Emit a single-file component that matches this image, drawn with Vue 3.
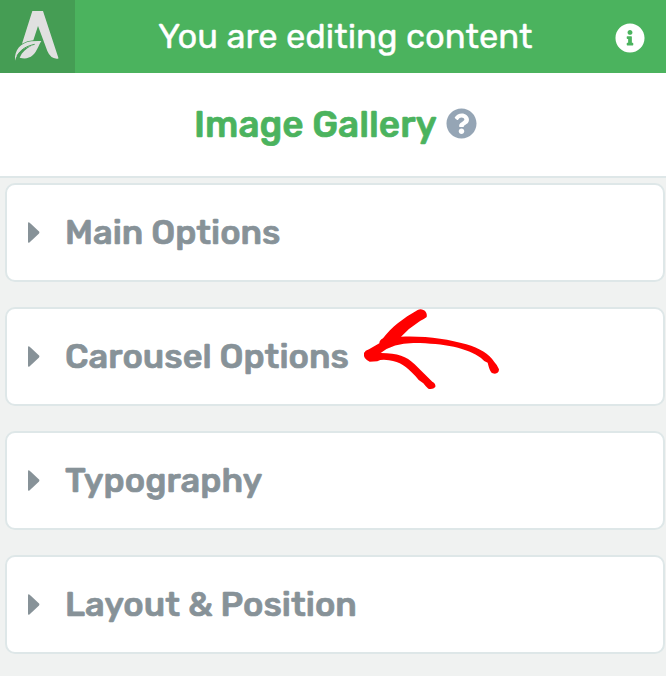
<template>
  <div class="panel">
    <header class="top-bar">
      <div class="logo">
        <svg width="75" height="73" viewBox="0 0 225 219">
          <path d="M97 33H129L175 173Q177 177 170 176Q151 175 142 153L114 78L100 121Q82 122 66 131Z" fill="#e0e0e0" />
          <path d="M45 182C43 151 61 128 94 124Q110 122 124 123C115 137 112 153 98 166C87 176 73 177 59 173C66 156 78 145 95 137C69 143 51 157 45 182Z" fill="#e0e0e0" />
          <path d="M51 168C62 148 80 138 104 133" fill="none" stroke="#459d54" stroke-width="3" />
        </svg>
      </div>
      <h1>You are editing content</h1>
      <svg class="info-icon" width="30" height="30" viewBox="0 0 512 512">
        <path fill="#fff" d="M256 8C119 8 8 119 8 256s111 248 248 248 248-111 248-248S393 8 256 8zm0 110c23 0 42 19 42 42s-19 42-42 42-42-19-42-42 19-42 42-42zm56 254c0 7-5 12-12 12h-88c-7 0-12-5-12-12v-24c0-7 5-12 12-12h12v-64h-12c-7 0-12-5-12-12v-24c0-7 5-12 12-12h64c7 0 12 5 12 12v100h12c7 0 12 5 12 12z" />
      </svg>
    </header>

    <div class="module-title">
      <h2>Image Gallery</h2>
      <svg class="help-icon" width="31" height="31" viewBox="0 0 512 512">
        <path fill="#95a5b5" d="M504 256c0 137-111 248-248 248S8 393 8 256 119 8 256 8s248 111 248 248zM262.700 90c-54.500 0-89.300 23-116.500 63.800-3.500 5.300-2.400 12.400 2.700 16.300l34.700 26.300c5.200 3.900 12.600 3 16.700-2.100 17.900-22.700 30.100-35.800 57.300-35.800 20.400 0 45.700 13.100 45.700 33 0 15-12.400 22.700-32.500 34C247.100 238.500 216 254.900 216 296v4c0 6.600 5.400 12 12 12h56c6.600 0 12-5.400 12-12v-1.300c0-28.500 83.200-29.600 83.200-106.700 0-58-60.200-102-116.500-102zM256 338c-25.400 0-46 20.600-46 46s20.600 46 46 46 46-20.600 46-46-20.600-46-46-46z" />
      </svg>
    </div>

    <div class="sections">
      <div v-for="section in sections" :key="section.name" class="section">
        <svg class="caret" width="12" height="21" viewBox="0 0 12 21">
          <path d="M0 1.500Q0-.5 1.700.8L10.800 9.300Q12 10.500 10.800 11.700L1.700 20.200Q0 21.500 0 19.500Z" fill="#879298" />
        </svg>
        <span class="section-name">{{ section.name }}</span>
        <svg v-if="section.marked" class="arrow" width="160" height="110" viewBox="0 0 480 330">
          <path d="M42 174Q45 167 57 163L88 145Q88 136 99 130C125 96 159 70 203 45C218 38 234 51 230 66C224 72 214 75 207 80Q178 98 153 125C227 122 295 132 349 148C389 160 417 176 433 201Q442 210 447 223C447 235 438 238 428 235C419 230 416 214 413 203Q400 198 393 189C354 159 281 145 194 144Q131 143 92 174C145 175 168 183 194 208L247 260Q258 265 256 276Q249 284 235 281Q228 276 220 265Q206 258 196 243C167 213 151 201 117 196Q94 192 82 199L59 200Q39 192 42 174Z" fill="#f00" />
        </svg>
      </div>
    </div>
  </div>
</template>

<script setup>
const sections = [
  { name: 'Main Options' },
  { name: 'Carousel Options', marked: true },
  { name: 'Typography' },
  { name: 'Layout & Position' },
];
</script>

<style>
body {
  margin: 0;
  background: #f0f2f1;
}
</style>

<style scoped>
.panel {
  min-height: 676px;
  background: #f0f2f1;
  font-family: Rubik, Roboto, sans-serif;
}

svg {
  display: block;
  flex-shrink: 0;
}

.top-bar {
  display: flex;
  align-items: center;
  height: 73px;
  background: #4bb35e;
}

.logo {
  width: 75px;
  height: 73px;
  background: #459d54;
}

h1 {
  flex: 1;
  margin: 0;
  padding-left: 83px;
  color: #fff;
  font-size: 34.5px;
  font-weight: 400;
  line-height: 71px;
  -webkit-text-stroke: 0.4px #fff;
  white-space: nowrap;
}

.info-icon {
  margin-right: 21px;
  margin-top: 3px;
}

.module-title {
  display: flex;
  align-items: center;
  box-sizing: border-box;
  height: 105px;
  padding-left: 194px;
  background: #fff;
  border-bottom: 2px solid #dee7e8;
}

h2 {
  width: 252px;
  margin: 0;
  padding-bottom: 2px;
  color: #4bb35e;
  font-size: 37px;
  font-weight: 500;
  -webkit-text-stroke: 0.7px #4bb35e;
  white-space: nowrap;
}

.help-icon {
  margin-bottom: 3px;
}

.sections {
  display: flex;
  flex-direction: column;
  gap: 25px;
  padding: 5px 1px 22px 5px;
}

.section {
  position: relative;
  display: flex;
  align-items: center;
  box-sizing: border-box;
  height: 99px;
  padding-left: 21px;
  background: #fff;
  border: 2px solid #dee7e8;
  border-radius: 10px;
}

.section-name {
  margin-left: 25px;
  color: #879298;
  font-size: 34.5px;
  font-weight: 500;
  -webkit-text-stroke: 0.7px #879298;
  white-space: nowrap;
}

/* hand-drawn pointer lying over the row */
.arrow {
  position: absolute;
  top: -14px;
  left: 343px;
}
</style>
